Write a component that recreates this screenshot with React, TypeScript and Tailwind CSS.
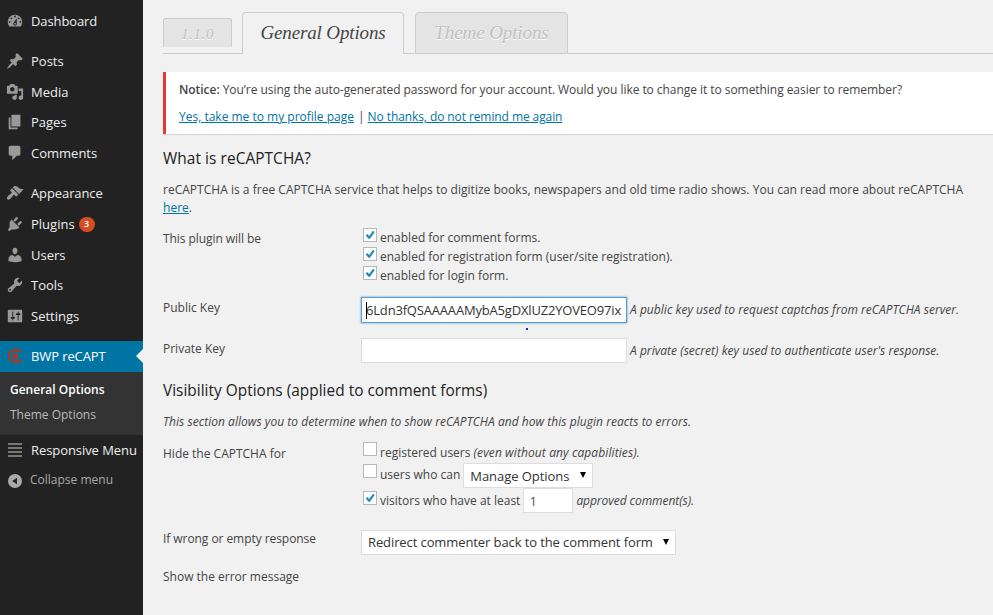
import React from "react";

const D = {
  dashboard:
    "M3.76 16h12.48c1.1-1.37 1.76-3.11 1.76-5 0-4.42-3.58-8-8-8s-8 3.58-8 8c0 1.89.66 3.63 1.76 5zM10 4c.55 0 1 .45 1 1s-.45 1-1 1-1-.45-1-1 .45-1 1-1zM6 6c.55 0 1 .45 1 1s-.45 1-1 1-1-.45-1-1 .45-1 1-1zm8 0c.55 0 1 .45 1 1s-.45 1-1 1-1-.45-1-1 .45-1 1-1zm-5.37 5.55L12 7v6c0 1.1-.9 2-2 2s-2-.9-2-2c0-.57.24-1.08.63-1.45zM4 10c.55 0 1 .45 1 1s-.45 1-1 1-1-.45-1-1 .45-1 1-1zm12 0c.55 0 1 .45 1 1s-.45 1-1 1-1-.45-1-1 .45-1 1-1zm-5 3c0-.55-.45-1-1-1s-1 .45-1 1 .45 1 1 1 1-.45 1-1z",
  post: "M10.44 3.02l1.82-1.82 6.36 6.35-1.83 1.82c-1.05-.68-2.48-.57-3.41.36l-.75.75c-.92.93-1.04 2.35-.35 3.41l-1.83 1.82-2.41-2.41-2.8 2.79c-.42.42-3.38 2.71-3.8 2.29s1.86-3.39 2.28-3.81l2.79-2.79L4.1 9.36l1.83-1.82c1.05.69 2.48.57 3.4-.36l.75-.75c.93-.92 1.05-2.35.36-3.41z",
  media:
    "M13 11V4c0-.55-.45-1-1-1h-1.67L9 1H5L3.67 3H2c-.55 0-1 .45-1 1v7c0 .55.45 1 1 1h10c.55 0 1-.45 1-1zM7 4.5c1.38 0 2.5 1.12 2.5 2.5S8.38 9.5 7 9.5 4.5 8.38 4.5 7 5.62 4.5 7 4.5zM14 6h5v10.5c0 1.38-1.12 2.5-2.5 2.5S14 17.88 14 16.5s1.12-2.5 2.5-2.5c.17 0 .34.02.5.05V9h-3V6zm-4 8.05V13h2v3.5c0 1.38-1.12 2.5-2.5 2.5S7 17.88 7 16.5 8.12 14 9.5 14c.17 0 .34.02.5.05z",
  page: "M6 15V2h10v13H6zm-1 1h8v2H3V5h2v11z",
  comments: "M5 2h9c1.1 0 2 .9 2 2v7c0 1.1-.9 2-2 2h-2l-5 5v-5H5c-1.1 0-2-.9-2-2V4c0-1.1.9-2 2-2z",
  appearance:
    "M14.48 11.06L7.41 3.99l1.5-1.5c.5-.56 2.3-.47 3.51.32 1.21.8 1.43 1.28 2.91 2.1 1.18.64 2.45 1.26 4.45.85zm-.71.71L6.7 4.7 4.93 6.47c-.39.39-.39 1.02 0 1.41l1.06 1.06c.39.39.39 1.03 0 1.42-.6.6-1.43 1.11-2.21 1.69-.35.26-.7.53-1.01.84C1.43 14.23.4 16.08 1.4 17.07c.99 1 2.84-.03 4.18-1.36.31-.31.58-.66.85-1.02.57-.78 1.08-1.61 1.69-2.21.39-.39 1.02-.39 1.41 0l1.06 1.06c.39.39 1.02.39 1.41 0z",
  plugins:
    "M13.11 4.36L9.87 7.6 8 5.73l3.24-3.24c.35-.34 1.05-.2 1.56.32.52.51.66 1.21.31 1.55zm-8 1.77l.91-1.12 9.01 9.01-1.19.84c-.71.71-2.63 1.16-3.82 1.16H6.14L4.9 17.26c-.59.59-1.54.59-2.12 0-.59-.58-.59-1.53 0-2.12l1.24-1.24v-3.88c0-1.13.4-3.19 1.09-3.89zm7.26 3.97l3.24-3.24c.34-.35 1.04-.21 1.55.31.52.51.66 1.21.31 1.55l-3.24 3.25z",
  users:
    "M10 9.25c-2.27 0-2.73-3.44-2.73-3.44C7 4.02 7.82 2 9.97 2c2.16 0 2.98 2.02 2.71 3.81 0 0-.41 3.44-2.68 3.44zm0 2.57L12.72 10c2.39 0 4.52 2.33 4.52 4.53v2.49s-3.65 1.13-7.24 1.13c-3.65 0-7.24-1.13-7.24-1.13v-2.49c0-2.25 1.94-4.48 4.47-4.48z",
  tools:
    "M16.68 9.77c-1.34 1.34-3.3 1.67-4.95.99l-5.41 6.52c-.99.99-2.59.99-3.58 0s-.99-2.59 0-3.57l6.52-5.42c-.68-1.65-.35-3.61.99-4.95 1.28-1.28 3.12-1.62 4.72-1.06l-2.89 2.89 2.82 2.82 2.86-2.87c.53 1.58.18 3.39-1.08 4.65zM3.81 16.21c.4.39 1.04.39 1.43 0 .4-.4.4-1.04 0-1.43-.39-.4-1.03-.4-1.43 0-.39.39-.39 1.03 0 1.43z",
  settings:
    "M18 16V4c0-.55-.45-1-1-1H3c-.55 0-1 .45-1 1v12c0 .55.45 1 1 1h14c.55 0 1-.45 1-1zM8 11h1c.55 0 1 .45 1 1s-.45 1-1 1H8v1.5c0 .28-.22.5-.5.5s-.5-.22-.5-.5V13H6c-.55 0-1-.45-1-1s.45-1 1-1h1V5.5c0-.28.22-.5.5-.5s.5.22.5.5V11zm5-2h-1c-.55 0-1-.45-1-1s.45-1 1-1h1V5.5c0-.28.22-.5.5-.5s.5.22.5.5V7h1c.55 0 1 .45 1 1s-.45 1-1 1h-1v5.5c0 .28-.22.5-.5.5s-.5-.22-.5-.5V9z",
};

type Item = { label: string; d: string; row: string; badge?: string };

const items: Item[] = [
  { label: "Dashboard", d: D.dashboard, row: "h-[30px] mb-[10px] tracking-[-0.1px]" },
  { label: "Posts", d: D.post, row: "h-[31px] pb-px" },
  { label: "Media", d: D.media, row: "h-[30px]" },
  { label: "Pages", d: D.page, row: "h-[31px] pb-px" },
  { label: "Comments", d: D.comments, row: "h-[30px] mb-[10px]" },
  { label: "Appearance", d: D.appearance, row: "h-[31px] pb-px tracking-[-0.1px]" },
  { label: "Plugins", d: D.plugins, row: "h-[30px]", badge: "3" },
  { label: "Users", d: D.users, row: "h-[31px]" },
  { label: "Tools", d: D.tools, row: "h-[30px]" },
  { label: "Settings", d: D.settings, row: "h-[31px] mb-[10px]" },
];

function Sidebar() {
  return (
    <aside className="w-[143px] shrink-0 bg-[#222] pt-[6px] text-[13px] leading-[18px] text-[#eee]">
      {items.map((it) => (
        <div key={it.label} className={"flex items-center pl-[6px] " + it.row}>
          <svg viewBox="0 0 20 20" className="mr-[7px] h-[18px] w-[18px] shrink-0 fill-[#999]">
            <path fillRule="evenodd" d={it.d} />
          </svg>
          <span>{it.label}</span>
          {it.badge && (
            <span className="ml-[4px] flex h-[15px] w-[16px] items-center justify-center rounded-full bg-[#d54e21] text-[9px] font-semibold text-white">
              {it.badge}
            </span>
          )}
        </div>
      ))}
      <div className="flex h-[31px] items-center bg-[#0074a2] pb-px pl-[6px] text-white">
        <svg viewBox="0 0 18 18" className="mr-[7px] h-[18px] w-[18px] shrink-0">
          <path
            d="M15.2 5.2C14 3.7 11.8 2.8 9.2 2.8a6.2 6.2 0 0 0 0 12.4c2.6 0 4.8-.9 6-2.4"
            fill="none"
            stroke="#cf2e08"
            strokeWidth="1.9"
          />
          <path
            fillRule="evenodd"
            d="M6.6 6.4h3.5c2.2 0 2.5 2.6.9 3.2l1.2 2.5h-1.9L9.2 10h-.6v2.1h-2zM8.6 7.8v.9h1.3v-.9z"
            fill="#cf2e08"
          />
        </svg>
        <span className="tracking-[-0.1px]">BWP reCAPT</span>
        <svg viewBox="0 0 7 14" className="ml-auto h-[14px] w-[7px] fill-[#f1f1f1]">
          <path d="M7 0v14L0 7z" />
        </svg>
      </div>
      <div className="h-[63px] bg-[#333] pl-[10px] pt-[5px] text-[12px] leading-[25px]">
        <div className="font-semibold text-white">General Options</div>
        <div className="text-[#bbb]">Theme Options</div>
      </div>
      <div className="flex h-[30px] items-center whitespace-nowrap pl-[8px] tracking-[-0.07px]">
        <div className="mr-[9px] flex w-[14px] flex-col gap-[2px]">
          <i className="h-[2px] bg-[#777]" />
          <i className="h-[2px] bg-[#777]" />
          <i className="h-[2px] bg-[#777]" />
          <i className="h-[2px] bg-[#777]" />
        </div>
        Responsive Menu
      </div>
      <div className="flex h-[30px] items-center pl-[8px] text-[12px] text-[#aaa]">
        <svg viewBox="0 0 14 14" className="mr-[8px] mt-px h-[14px] w-[14px]">
          <circle cx="7" cy="7" r="7" fill="#aaa" />
          <path d="M9 3.8v6.4L4.2 7z" fill="#222" />
        </svg>
        Collapse menu
      </div>
    </aside>
  );
}

function Check({ on }: { on?: boolean }) {
  return (
    <span className="mr-[3px] flex h-[14px] w-[14px] shrink-0 items-center justify-center border border-[#b4b9be] bg-white">
      {on && (
        <svg viewBox="0 0 12 12" className="h-[12px] w-[12px] fill-[#1e8cbe]">
          <path d="M9 1.8l1.7 1.1-4.7 6.9H4.5L1.7 6.4l1.5-1.4 2 1.9z" />
        </svg>
      )}
    </span>
  );
}

function Caret({ className }: { className: string }) {
  return (
    <svg viewBox="0 0 6 6" className={"h-[6px] w-[6px] " + className}>
      <path d="M0 0h6L3 6z" />
    </svg>
  );
}

const tabFont = "font-['Liberation_Serif',serif] italic";

export default function App() {
  return (
    <div className="flex h-[615px] w-[993px] overflow-hidden bg-[#f1f1f1] font-['Open_Sans',sans-serif] text-[12px] leading-[18px] text-[#444]">
      <Sidebar />
      <main className="flex min-w-0 flex-1 flex-col whitespace-nowrap pl-[20px]">
        <div className={"flex h-[54px] shrink-0 items-end " + tabFont}>
          <div className="flex h-[54px] w-[79px] flex-col border-b border-[#ccc] pt-[18px]">
            <div className="flex h-[29px] w-[69px] items-center justify-center rounded-t-[3px] border border-b-0 border-[#ccc] bg-[#e4e4e4] pt-[2px] text-[15px] tracking-[0.6px] text-[#c1c1c1] [text-shadow:0_1px_0_#fff]">
              1.1.0
            </div>
          </div>
          <div className="flex h-[42px] w-[162px] items-center justify-center rounded-t-[4px] border border-b-0 border-[#ccc] pb-[2px] text-[19px] tracking-[-0.13px] text-[#464646]">
            General Options
          </div>
          <div className="h-px w-[11px] bg-[#ccc]" />
          <div className="flex h-[42px] w-[153px] items-center justify-center rounded-t-[4px] border border-[#ccc] bg-[#e4e4e4] pb-px text-[19px] tracking-[-0.1px] text-[#c1c1c1] [text-shadow:0_1px_0_#fff]">
            Theme Options
          </div>
          <div className="h-px flex-1 bg-[#ccc]" />
        </div>

        <div className="mt-[18px] h-[62px] shrink-0 border-l-[3px] border-[#dd3d36] bg-white pl-[13px] pt-[9px] shadow-[0_1px_1px_0_rgba(0,0,0,0.1)]">
          <div className="tracking-[-0.05px]">
            <span className="font-semibold">Notice:</span> You’re using the auto-generated password for your account.
            Would you like to change it to something easier to remember?
          </div>
          <div className="mt-[9px]">
            <a className="text-[#0074a2] underline">Yes, take me to my profile page</a>
            <span className="ml-[4px] mr-[3px]">|</span>
            <a className="tracking-[-0.09px] text-[#0074a2] underline">No thanks, do not remind me again</a>
          </div>
        </div>

        <h3 className="mt-[14px] h-[20px] text-[15.4px] leading-[22px] tracking-[0.08px] text-[#222]">
          What is reCAPTCHA?
        </h3>
        <p className="mt-[13px] h-[36px] tracking-[0.02px]">
          reCAPTCHA is a free CAPTCHA service that helps to digitize books, newspapers and old time radio shows. You can
          read more about reCAPTCHA
          <br />
          <a className="text-[#0074a2] underline">here</a>.
        </p>

        <div className="mt-[11px] flex h-[57px]">
          <div className="w-[200px]">
            <div className="pt-[2px] tracking-[-0.07px]">This plugin will be</div>
          </div>
          <div>
            {[
              "enabled for comment forms.",
              "enabled for registration form (user/site registration).",
              "enabled for login form.",
            ].map((t) => (
              <div key={t} className="flex h-[19px]">
                <Check on />
                <span className="pt-px">{t}</span>
              </div>
            ))}
          </div>
        </div>

        <div className="mt-[11px] flex h-[28px] items-center">
          <div className="w-[198px] pb-[4px]">Public Key</div>
          <div className="relative flex h-[26px] w-[266px] items-center overflow-visible border border-[#5b9dd9] bg-white pl-[4px] text-[13px] tracking-[-0.18px] text-[#333] shadow-[0_0_2px_rgba(30,140,190,0.8)]">
            <i className="absolute left-[4px] top-[4px] h-[17px] w-px bg-black" />
            6Ldn3fQSAAAAAMybA5gDXlUZ2YOVEO97ix
            <i className="absolute left-[164px] top-[30px] h-[2px] w-[2px] bg-[#22e]" />
          </div>
          <span className="ml-[3px] italic tracking-[0.03px]">
            A public key used to request captchas from reCAPTCHA server.
          </span>
        </div>

        <div className="mt-[14px] flex h-[25px] items-center">
          <div className="w-[198px] pb-[3px]">Private Key</div>
          <div className="h-[25px] w-[266px] border border-[#ddd] bg-white" />
          <span className="ml-[3px] italic tracking-[0.03px]">
            A private (secret) key used to authenticate user's response.
          </span>
        </div>

        <h3 className="mt-[17px] h-[20px] text-[15.4px] leading-[22px] tracking-[0.02px] text-[#222]">
          Visibility Options (applied to comment forms)
        </h3>
        <p className="mt-[13px] italic tracking-[0.04px]">
          This section allows you to determine when to show reCAPTCHA and how this plugin reacts to errors.
        </p>

        <div className="mt-[11px] flex h-[71px]">
          <div className="w-[200px] pt-[3px]">Hide the CAPTCHA for</div>
          <div>
            <div className="flex h-[21px]">
              <Check />
              <span className="pt-[2px]">
                registered users <em className="tracking-[0.1px]">(even without any capabilities).</em>
              </span>
            </div>
            <div className="flex h-[25px]">
              <div className="pt-[1px]">
                <Check />
              </div>
              <span className="pt-[3px]">users who can</span>
              <div className="ml-[3px] flex h-[25px] w-[130px] items-center border border-[#ddd] bg-white pl-[6px] pr-[6px] text-[13px] tracking-[-0.06px] text-[#333]">
                Manage Options
                <Caret className="mb-[2px] ml-auto" />
              </div>
            </div>
            <div className="flex h-[25px]">
              <div className="pt-[3px]">
                <Check on />
              </div>
              <span className="pt-[4px]">visitors who have at least</span>
              <div className="ml-[3px] flex h-[25px] w-[50px] items-center border border-[#ddd] bg-white pl-[5px] text-[13px] text-[#555]">
                1
              </div>
              <em className="ml-[3px] pt-[4px] tracking-[-0.05px]">approved comment(s).</em>
            </div>
          </div>
        </div>

        <div className="mt-[17px] flex h-[25px] items-center">
          <div className="w-[198px] pb-[7px] tracking-[-0.06px]">If wrong or empty response</div>
          <div className="flex h-[25px] w-[315px] items-center border border-[#ddd] bg-white pb-[1px] pl-[6px] pr-[6px] text-[13px] tracking-[-0.1px] text-[#333]">
            Redirect commenter back to the comment form
            <Caret className="ml-auto" />
          </div>
        </div>
        <div className="mt-[13px]">Show the error message</div>
      </main>
    </div>
  );
}
